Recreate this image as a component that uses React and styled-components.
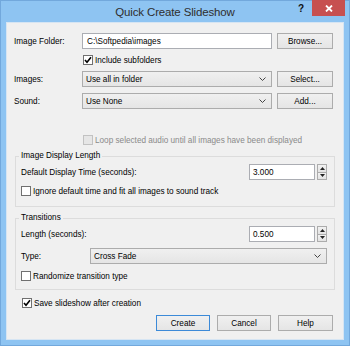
import React from 'react';
import styled, { createGlobalStyle } from 'styled-components';

const Global = createGlobalStyle`
  html, body { margin: 0; padding: 0; background: #ffffff; }
  body { font-family: "Liberation Sans", Arial, sans-serif; }
`;

const Window = styled.div`
  width: 350px;
  height: 346px;
  box-sizing: border-box;
  background: #8ec4f2;
  border: 1px solid #72a8dc;
  display: flex;
  flex-direction: column;
  font-family: "Liberation Sans", Arial, sans-serif;
  font-size: 8.2px;
  color: #000;
`;

const TitleBar = styled.div`
  height: 22px;
  display: grid;
  grid-template-columns: 1fr auto 1fr;
  align-items: start;
`;

const Title = styled.div`
  grid-column: 2;
  font-size: 11.5px;
  letter-spacing: -0.15px;
  line-height: 22px;
  color: #2e2e2e;
  white-space: nowrap;
`;

const Caption = styled.div`
  grid-column: 3;
  justify-self: end;
  display: flex;
  align-items: flex-start;
  margin-right: 4px;
`;

const HelpGlyph = styled.span`
  font-weight: bold;
  font-size: 10px;
  line-height: 10px;
  margin-top: 3px;
  margin-right: 8px;
  color: #111;
`;

const CloseButton = styled.div`
  width: 33px;
  height: 16px;
  margin-top: -1px;
  background: #c75050;
  display: flex;
  align-items: center;
  justify-content: center;
`;

const Client = styled.div`
  flex: 1;
  margin: 0 6px 6px;
  background: #f0f0f0;
  box-shadow: 0 0 0 1px #d6e5f3;
  padding: 10px 10px 8px 7px;
  display: flex;
  flex-direction: column;
`;

const FormRow = styled.div`
  display: grid;
  grid-template-columns: 63px 190px 56px;
  column-gap: 5px;
  align-items: center;
  height: 16px;
  margin-top: ${p => p.$mt || 0}px;
`;

const Label = styled.span`
  white-space: nowrap;
`;

const TextBox = styled.div`
  height: 16px;
  box-sizing: border-box;
  border: 1px solid #abadb3;
  background: #fff;
  padding: 0 4px;
  display: flex;
  align-items: center;
  white-space: nowrap;
`;

const Combo = styled.div`
  height: 16px;
  box-sizing: border-box;
  border: 1px solid #acacac;
  background: linear-gradient(#f0f0f0, #e5e5e5);
  padding: 0 5px 0 3px;
  display: flex;
  align-items: center;
  justify-content: space-between;
  white-space: nowrap;
`;

const Button = styled.div`
  height: 16px;
  width: ${p => p.$w || 56}px;
  box-sizing: border-box;
  border: 1px solid ${p => (p.$primary ? '#3c8ad8' : '#acacac')};
  background: linear-gradient(#f0f0f0, #e5e5e5);
  display: flex;
  align-items: center;
  justify-content: center;
  white-space: nowrap;
`;

const CheckRow = styled.div`
  display: flex;
  align-items: center;
  gap: 2px;
  height: 12px;
  margin-top: ${p => p.$mt || 0}px;
  margin-left: ${p => p.$ml || 0}px;
  color: ${p => (p.$disabled ? '#8a8a8a' : '#000')};
  white-space: nowrap;
`;

const Box = styled.span`
  width: 10px;
  height: 10px;
  box-sizing: border-box;
  border: 1px solid ${p => (p.$disabled ? '#c2c2c2' : '#707070')};
  background: ${p => (p.$disabled ? '#e6e6e6' : '#fff')};
  display: flex;
  align-items: center;
  justify-content: center;
  flex: none;
`;

const Group = styled.fieldset`
  align-self: flex-start;
  width: 320px;
  box-sizing: border-box;
  margin: ${p => p.$mt}px 0 0 1px;
  border: 1px solid #dcdcdc;
  padding: 2px 7px ${p => p.$pb}px 5px;
  min-width: 0;
  display: flex;
  flex-direction: column;
`;

const Legend = styled.legend`
  padding: 0 2px;
  margin-left: -2px;
  line-height: 12px;
  font-size: 8.2px;
`;

const SpinLine = styled.div`
  display: flex;
  align-items: center;
  height: 16px;
`;

const SpinField = styled.div`
  width: 66px;
  height: 16px;
  box-sizing: border-box;
  border: 1px solid #abadb3;
  background: #fff;
  padding: 0 3px;
  display: flex;
  align-items: center;
  margin-left: auto;
`;

const SpinButtons = styled.div`
  width: 10px;
  height: 16px;
  margin-left: 2px;
  display: flex;
  flex-direction: column;
`;

const SpinHalf = styled.div`
  flex: 1;
  box-sizing: border-box;
  border: 1px solid #acacac;
  border-top-width: ${p => (p.$down ? 0 : 1)}px;
  background: linear-gradient(#f2f2f2, #e3e3e3);
  display: flex;
  align-items: center;
  justify-content: center;
`;

const TypeRow = styled.div`
  display: grid;
  grid-template-columns: 69px 1fr;
  align-items: center;
  height: 16px;
  margin-top: 6px;
`;

const ButtonBar = styled.div`
  display: flex;
  justify-content: flex-end;
  gap: 7px;
  margin-top: 6px;
`;

const Chevron = () => (
  <svg width="7" height="4" viewBox="0 0 7 4">
    <polyline points="0.5,0.5 3.5,3.5 6.5,0.5" fill="none" stroke="#444" strokeWidth="1" />
  </svg>
);

const Check = () => (
  <svg width="8" height="8" viewBox="0 0 8 8">
    <polyline points="1,4 3,6.3 7,1.2" fill="none" stroke="#000" strokeWidth="1.6" />
  </svg>
);

const Arrow = ({ down }) => (
  <svg width="5" height="3" viewBox="0 0 5 3">
    <polygon points={down ? '0,0 5,0 2.5,3' : '0,3 5,3 2.5,0'} fill="#222" />
  </svg>
);

const CheckBox = ({ checked, disabled, children, mt, ml }) => (
  <CheckRow $mt={mt} $ml={ml} $disabled={disabled}>
    <Box $disabled={disabled}>{checked && <Check />}</Box>
    <span>{children}</span>
  </CheckRow>
);

const Spin = ({ value }) => (
  <>
    <SpinField>{value}</SpinField>
    <SpinButtons>
      <SpinHalf><Arrow /></SpinHalf>
      <SpinHalf $down><Arrow down /></SpinHalf>
    </SpinButtons>
  </>
);

export default function App() {
  return (
    <Window>
      <Global />
      <TitleBar>
        <Title>Quick Create Slideshow</Title>
        <Caption>
          <HelpGlyph>?</HelpGlyph>
          <CloseButton>
            <svg width="8" height="7" viewBox="0 0 8 7">
              <path d="M1 0.5 L7 6.5 M7 0.5 L1 6.5" stroke="#fff" strokeWidth="1.8" />
            </svg>
          </CloseButton>
        </Caption>
      </TitleBar>
      <Client>
        <FormRow>
          <Label>Image Folder:</Label>
          <TextBox>C:\Softpedia\images</TextBox>
          <Button>Browse...</Button>
        </FormRow>
        <CheckBox checked mt={5} ml={69}>Include subfolders</CheckBox>
        <FormRow $mt={5}>
          <Label>Images:</Label>
          <Combo>Use all in folder<Chevron /></Combo>
          <Button>Select...</Button>
        </FormRow>
        <FormRow $mt={6}>
          <Label>Sound:</Label>
          <Combo>Use None<Chevron /></Combo>
          <Button>Add...</Button>
        </FormRow>
        <CheckBox disabled mt={25} ml={69}>
          Loop selected audio until all images have been displayed
        </CheckBox>
        <Group $mt={4} $pb={9}>
          <Legend>Image Display Length</Legend>
          <SpinLine>
            <Label>Default Display Time (seconds):</Label>
            <Spin value="3.000" />
          </SpinLine>
          <CheckBox mt={5}>Ignore default time and fit all images to sound track</CheckBox>
        </Group>
        <Group $mt={5} $pb={7}>
          <Legend>Transitions</Legend>
          <SpinLine>
            <Label>Length (seconds):</Label>
            <Spin value="0.500" />
          </SpinLine>
          <TypeRow>
            <Label>Type:</Label>
            <Combo>Cross Fade<Chevron /></Combo>
          </TypeRow>
          <CheckBox mt={6}>Randomize transition type</CheckBox>
        </Group>
        <CheckBox checked mt={7} ml={8}>Save slideshow after creation</CheckBox>
        <ButtonBar>
          <Button $w={54} $primary>Create</Button>
          <Button $w={54}>Cancel</Button>
          <Button $w={55}>Help</Button>
        </ButtonBar>
      </Client>
    </Window>
  );
}
